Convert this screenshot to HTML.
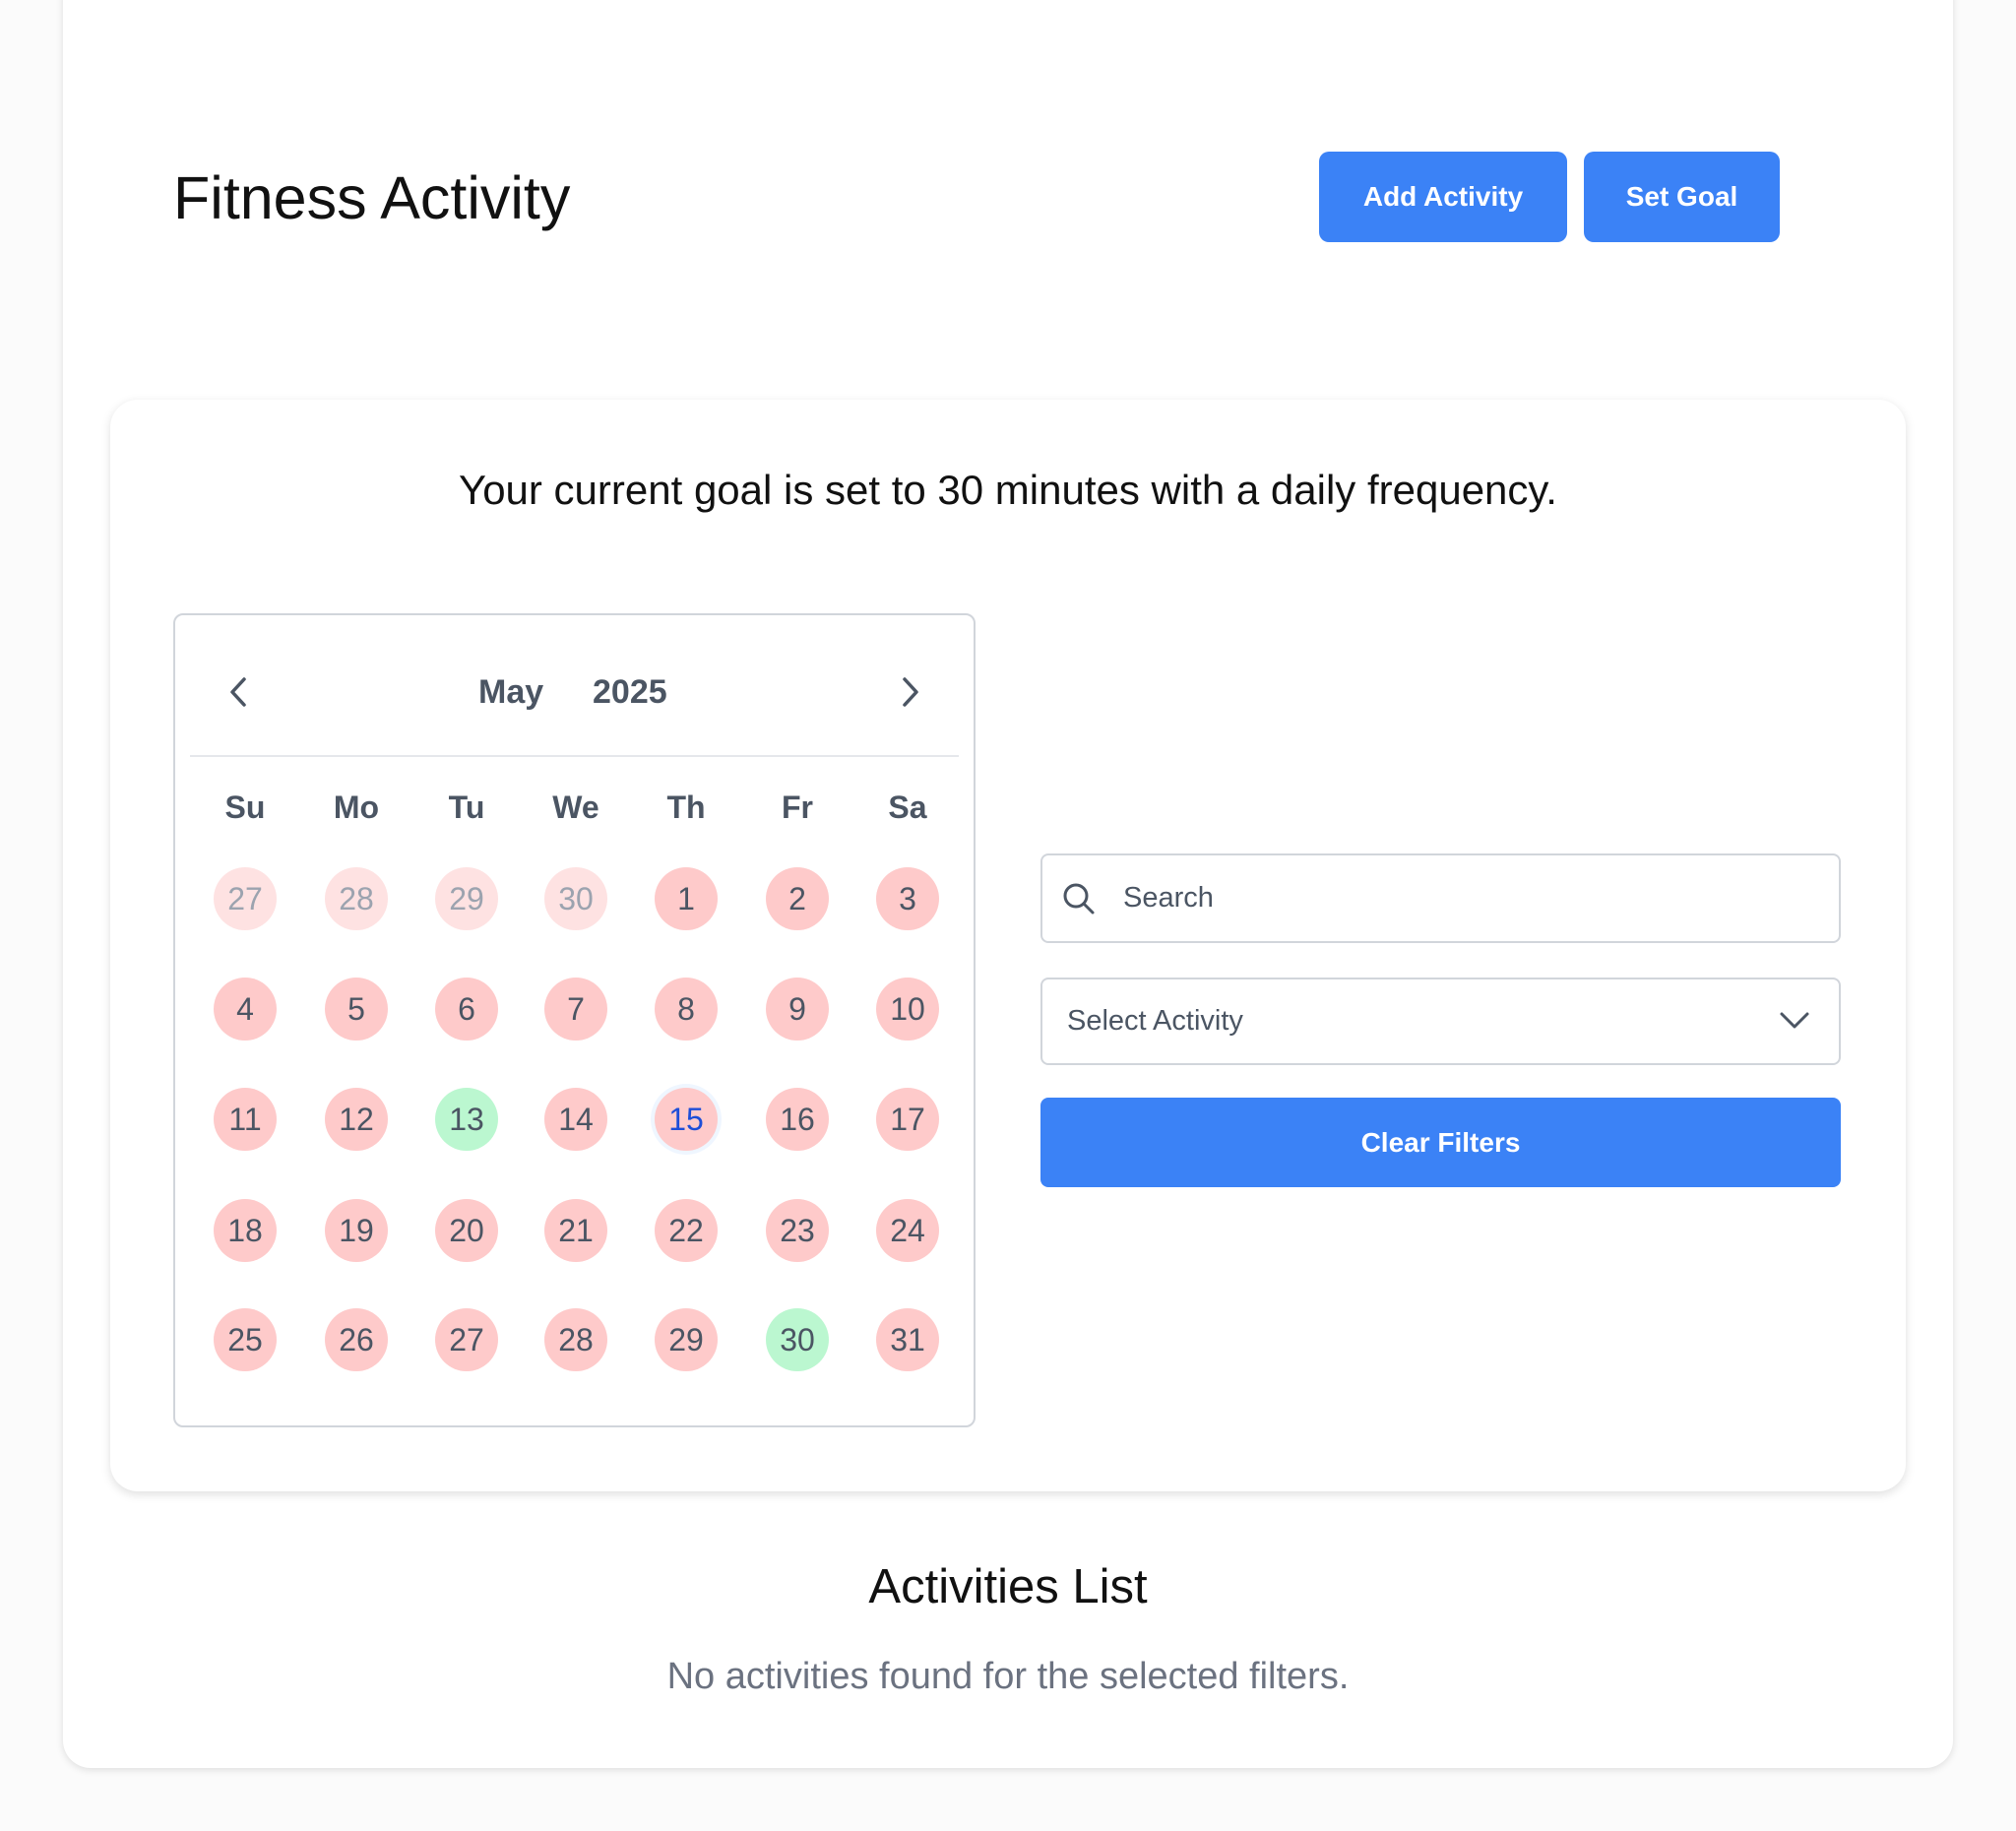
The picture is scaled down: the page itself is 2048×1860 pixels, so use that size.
<!DOCTYPE html>
<html><head><style>
*{box-sizing:border-box;margin:0;padding:0}
body{width:2048px;height:1860px;background:#fbfbfb;font-family:"Liberation Sans",sans-serif;position:relative;overflow:hidden}
.outer{position:absolute;left:64px;top:-30px;width:1920px;height:1826px;background:#fff;border-radius:28px;box-shadow:0 2px 8px rgba(0,0,0,.12)}
.abs{position:absolute}
h1{position:absolute;left:176px;top:166px;font-size:61px;font-weight:400;color:#111}
.btn{position:absolute;background:#3b82f6;color:#fff;font-weight:700;font-size:28px;border-radius:10px;display:flex;align-items:center;justify-content:center}
.inner{position:absolute;left:112px;top:406px;width:1824px;height:1109px;background:#fff;border-radius:28px;box-shadow:0 3px 10px rgba(0,0,0,.13)}
.cal{position:absolute;left:176px;top:623px;width:815px;height:827px;border:2px solid #d1d5db;border-radius:10px}
.day{position:absolute;width:64px;height:64px;border-radius:50%;display:flex;align-items:center;justify-content:center;font-size:32px;color:#4b5563;background:#fecaca}
.wd{position:absolute;width:80px;text-align:center;font-size:32px;font-weight:700;color:#4b5563}
.input{position:absolute;left:1057px;width:813px;border:2px solid #d1d5db;border-radius:8px;font-size:29px;color:#4b5563;display:flex;align-items:center}
</style></head><body>
<div class="outer"></div>
<h1>Fitness Activity</h1>
<div class="btn" style="left:1340px;top:154px;width:252px;height:92px">Add Activity</div>
<div class="btn" style="left:1609px;top:154px;width:199px;height:92px">Set Goal</div>
<div class="inner"></div>
<div class="abs" style="left:0;width:2048px;top:474px;text-align:center;font-size:42px;color:#111">Your current goal is set to 30 minutes with a daily frequency.</div>
<div class="cal"></div>
<svg class="abs" style="left:228px;top:686px" width="28" height="34" viewBox="0 0 28 34"><path d="M20 4 L8 17 L20 30" fill="none" stroke="#4b5563" stroke-width="3.5" stroke-linecap="round" stroke-linejoin="round"/></svg>
<svg class="abs" style="left:911px;top:686px" width="28" height="34" viewBox="0 0 28 34"><path d="M8 4 L20 17 L8 30" fill="none" stroke="#4b5563" stroke-width="3.5" stroke-linecap="round" stroke-linejoin="round"/></svg>
<div class="abs" style="left:486px;top:684px;font-size:34px;font-weight:700;color:#4b5563">May</div>
<div class="abs" style="left:602px;top:684px;font-size:34px;font-weight:700;color:#4b5563">2025</div>
<div class="abs" style="left:193px;top:767px;width:781px;height:2px;background:#e5e7eb"></div>
<div id="g"></div>
<div class="input" style="top:867px;height:91px;padding-left:82px">Search</div>
<svg class="abs" style="left:1078px;top:895px" width="36" height="36" viewBox="0 0 36 36"><circle cx="15" cy="15" r="11" fill="none" stroke="#4b5563" stroke-width="3"/><path d="M23 23 L32 32" stroke="#4b5563" stroke-width="3" stroke-linecap="round"/></svg>
<div class="input" style="top:993px;height:89px;padding-left:25px">Select Activity</div>
<svg class="abs" style="left:1806px;top:1025px" width="34" height="24" viewBox="0 0 34 24"><path d="M4 5 L17 18 L30 5" fill="none" stroke="#4b5563" stroke-width="3" stroke-linecap="round" stroke-linejoin="round"/></svg>
<div class="btn" style="left:1057px;top:1115px;width:813px;height:91px;border-radius:8px">Clear Filters</div>
<div class="abs" style="left:0;width:2048px;top:1584px;text-align:center;font-size:49px;color:#111">Activities List</div>
<div class="abs" style="left:0;width:2048px;top:1682px;text-align:center;font-size:38px;color:#6b7280">No activities found for the selected filters.</div>
<script>
var cx=[249,362,474,585,697,810,922],ry=[913,1025,1137,1250,1361],h='';
['Su','Mo','Tu','We','Th','Fr','Sa'].forEach(function(d,i){h+='<div class="wd" style="left:'+(cx[i]-40)+'px;top:802px">'+d+'</div>'});
var days=[27,28,29,30];for(var i=1;i<=31;i++)days.push(i);
days.forEach(function(d,k){var r=Math.floor(k/7),c=k%7,s='';
if(k<4)s='background:#fee2e2;color:#9ca3af;';
if(k>=4&&(d==13||d==30))s='background:#bbf7d0;';
if(k>=4&&d==15)s='color:#1d4ed8;box-shadow:0 0 0 4px #eff6ff;';
h+='<div class="day" style="left:'+(cx[c]-32)+'px;top:'+(ry[r]-32)+'px;'+s+'">'+d+'</div>'});
document.getElementById('g').innerHTML=h;
</script>
</body></html>
